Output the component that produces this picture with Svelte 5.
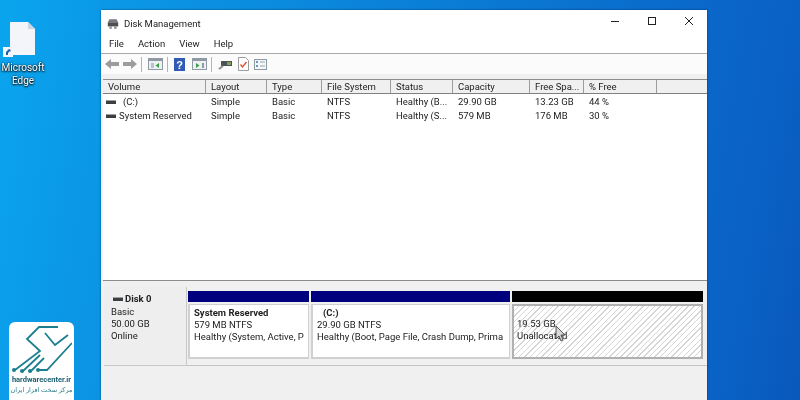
<script>
  const menus = ['File', 'Action', 'View', 'Help'];

  const columns = [
    { name: 'Volume', width: 103 },
    { name: 'Layout', width: 61 },
    { name: 'Type', width: 55 },
    { name: 'File System', width: 69 },
    { name: 'Status', width: 62 },
    { name: 'Capacity', width: 77 },
    { name: 'Free Spa...', width: 54 },
    { name: '% Free', width: 73 }
  ];

  const volumes = [
    { name: '(C:)', indent: true, cells: ['Simple', 'Basic', 'NTFS', 'Healthy (B...', '29.90 GB', '13.23 GB', '44 %'] },
    { name: 'System Reserved', indent: false, cells: ['Simple', 'Basic', 'NTFS', 'Healthy (S...', '579 MB', '176 MB', '30 %'] }
  ];
</script>

<div class="desktop">
  <div class="shortcut">
    <svg class="file-icon" width="36" height="38" viewBox="0 0 36 38">
      <path d="M7 2h18l7 7v26H7z" fill="#f3f5fb" />
      <path d="M25 2l7 7h-7z" fill="#cfd6e2" />
      <rect x="0" y="27" width="10" height="10" fill="#f4f6fa" />
      <path d="M3 35v-3l2-2H4l3-1 1 3-1-1-2 2v2z" fill="#1f5fb0" />
    </svg>
    <span>Microsoft</span>
    <span>Edge</span>
  </div>

  <div class="window">
    <header class="titlebar">
      <svg width="12" height="12" viewBox="0 0 15 14">
        <path d="M3 1h9l2 4H1z" fill="#77797c" />
        <rect x="1" y="5" width="13" height="5" fill="#4c4e52" />
        <rect x="3" y="10" width="3" height="3" fill="#8a8c90" />
        <rect x="9" y="10" width="3" height="3" fill="#8a8c90" />
      </svg>
      <span class="title">Disk Management</span>
      <div class="controls">
        <svg width="10" height="10" viewBox="0 0 10 10"><path d="M1 5.500h8" stroke="#222" /></svg>
        <svg width="10" height="10" viewBox="0 0 10 10"><rect x="1.500" y="1.500" width="7" height="7" fill="none" stroke="#222" /></svg>
        <svg width="10" height="10" viewBox="0 0 10 10"><path d="M1 1l8 8M9 1l-8 8" stroke="#222" /></svg>
      </div>
    </header>

    <nav class="menubar">
      {#each menus as item}
        <span>{item}</span>
      {/each}
    </nav>

    <div class="toolbar">
      <svg width="14" height="12" viewBox="0 0 14 12"><path d="M0 6l6-5v3h8v4H6v3z" fill="#9a9c9e" /></svg>
      <svg width="14" height="12" viewBox="0 0 14 12"><path d="M14 6L8 1v3H0v4h8v3z" fill="#9a9c9e" /></svg>
      <i class="sep"></i>
      <svg width="15" height="12" viewBox="0 0 15 12">
        <rect x="0.500" y="0.500" width="14" height="11" fill="#eef1f4" stroke="#8f9aa3" />
        <rect x="1" y="1" width="13" height="2" fill="#8f9aa3" />
        <rect x="3" y="5" width="3" height="5" fill="#b9c3cb" />
        <path d="M11 5v5L7.500 7.500z" fill="#3aa04a" />
      </svg>
      <i class="sep"></i>
      <svg class="help-icon" width="11" height="13" viewBox="0 0 11 13">
        <rect width="11" height="13" fill="#2f5bb5" />
        <text x="5.500" y="10.500" text-anchor="middle" class="help">?</text>
      </svg>
      <svg width="15" height="12" viewBox="0 0 15 12">
        <rect x="0.500" y="0.500" width="14" height="11" fill="#eef1f4" stroke="#8f9aa3" />
        <rect x="1" y="1" width="13" height="2" fill="#8f9aa3" />
        <path d="M4 5v5l3.500-2.500z" fill="#3aa04a" />
        <rect x="10" y="5" width="2" height="5" fill="#8f9aa3" />
      </svg>
      <i class="sep"></i>
      <svg width="14" height="12" viewBox="0 0 14 12">
        <rect x="3" y="3" width="11" height="5" fill="#4c5257" />
        <rect x="9" y="4" width="4" height="3" fill="#7ea05c" />
        <path d="M5 8L1 11" stroke="#8a8f94" stroke-width="2" />
      </svg>
      <svg class="check-doc" width="11" height="14" viewBox="0 0 11 14">
        <path d="M0.500 0.500h7l3 3v10h-10z" fill="#fff" stroke="#9a9c9e" />
        <path d="M2.500 7.500l2 2.500 4-5" fill="none" stroke="#d9542b" stroke-width="1.400" />
      </svg>
      <svg class="check-list" width="13" height="11" viewBox="0 0 13 11">
        <rect x="0.500" y="0.500" width="12" height="10" fill="#f4f7fa" stroke="#8f9aa3" />
        <path d="M2 3h2M2 7h2" stroke="#3f76b5" stroke-width="1.500" />
        <path d="M6 3h5M6 7h5" stroke="#9aa3ab" />
      </svg>
    </div>

    <section class="list">
      <div class="list-head">
        {#each columns as col}
          <div class="col" style="width: {col.width}px">{col.name}</div>
        {/each}
      </div>
      {#each volumes as vol}
        <div class="row">
          <div class="cell vol" style="width: {columns[0].width}px">
            <span class="drive"></span>
            <span class:indent={vol.indent}>{vol.name}</span>
          </div>
          {#each vol.cells as cell, i}
            <div class="cell" style="width: {columns[i + 1].width}px">{cell}</div>
          {/each}
        </div>
      {/each}
    </section>

    <section class="graphical">
      <div class="disk-row">
        <div class="disk-label">
          <div class="disk-name"><span class="drive"></span>Disk 0</div>
          <div>Basic</div>
          <div>50.00 GB</div>
          <div>Online</div>
        </div>
        <div class="partition system">
          <div class="bar"></div>
          <div class="box">
            <strong>System Reserved</strong>
            <div>579 MB NTFS</div>
            <div>Healthy (System, Active, P</div>
          </div>
        </div>
        <div class="partition primary">
          <div class="bar"></div>
          <div class="box">
            <strong class="drive-letter">(C:)</strong>
            <div>29.90 GB NTFS</div>
            <div>Healthy (Boot, Page File, Crash Dump, Prima</div>
          </div>
        </div>
        <div class="partition free">
          <div class="bar"></div>
          <div class="box">
            <div>19.53 GB</div>
            <div>Unallocated</div>
            <svg class="cursor" width="12" height="18" viewBox="0 0 12 18">
              <path d="M1 1v13l3-3 2 5 2-1-2-5h4z" fill="#d8d8d8" stroke="#333" stroke-width="0.800" />
            </svg>
          </div>
        </div>
      </div>
    </section>
  </div>

  <div class="badge">
    <svg width="60" height="48" viewBox="0 0 60 48">
      <g fill="none" stroke="#1b7f8f" stroke-width="1.800">
        <path d="M46 2H27L15 14l13 12L3 45" />
        <path d="M33 8l10 12 13-10" />
        <path d="M60 18L35 45h-9" />
        <path d="M10 47l18-17" />
        <path d="M18 47l14-14" />
      </g>
      <g fill="#1b7f8f">
        <circle cx="2" cy="45" r="2" />
        <circle cx="10" cy="46" r="2" />
        <circle cx="18" cy="46" r="2" />
        <circle cx="26" cy="45" r="2" />
      </g>
    </svg>
    <span class="brand">hardwarecenter.ir</span>
    <span class="brand-fa">مرکز سخت افزار ایران</span>
  </div>
</div>

<style>
  :global(body) {
    margin: 0;
  }

  .desktop {
    position: relative;
    width: 800px;
    height: 400px;
    overflow: hidden;
    background: linear-gradient(100deg, #0aa5ee 0%, #0b98e6 13%, #0a62c6 90%, #0a58bc 100%);
    font-family: Roboto, "Liberation Sans", sans-serif;
    font-size: 9.500px;
    color: #222;
    filter: blur(0.300px);
  }

  .shortcut {
    position: absolute;
    left: 0;
    top: 20px;
    width: 46px;
    display: flex;
    flex-direction: column;
    align-items: center;
    color: #fff;
    font-size: 10px;
    line-height: 13px;
    text-shadow: 0 0 2px #000, 0 1px 2px #000;
  }

  .file-icon {
    align-self: flex-start;
    margin: 0 0 3px 3px;
  }

  .window {
    position: absolute;
    left: 101px;
    top: 10px;
    width: 606px;
    height: 390px;
    display: flex;
    flex-direction: column;
    background: #f0f0f0;
    box-shadow: 0 0 2px rgba(0, 0, 0, 0.5);
  }

  .titlebar {
    height: 27px;
    flex: none;
    display: flex;
    align-items: center;
    gap: 5px;
    padding-left: 6px;
    background: #fff;
  }

  .controls {
    margin: 0 0 5px auto;
    display: flex;
    gap: 27px;
    padding-right: 13px;
  }

  .menubar {
    height: 16px;
    flex: none;
    display: flex;
    gap: 14px;
    padding-left: 8px;
    background: #fff;
    border-bottom: 1px solid #a9a9a9;
    line-height: 14px;
  }

  .toolbar {
    height: 20px;
    flex: none;
    display: flex;
    align-items: center;
    gap: 4px;
    padding-left: 4px;
    background: #fbfbfb;
  }

  .sep {
    width: 1px;
    height: 15px;
    margin-right: 2px;
    background: #b5b5b5;
  }

  .help-icon {
    margin-right: 3px;
  }

  .check-doc {
    margin-left: 2px;
  }

  .check-list {
    margin-left: 1px;
  }

  .help {
    font: bold 11px "Liberation Sans", sans-serif;
    fill: #fff;
  }

  .list {
    flex: none;
    margin: 5px 0 0 2px;
    height: 201px;
    background: #fff;
    border-bottom: 1px solid #8c8c8c;
  }

  .list-head {
    height: 15px;
    display: flex;
    background: #f0f0f0;
    border-top: 1px solid #8f8f8f;
    border-bottom: 1px solid #808080;
    box-sizing: border-box;
  }

  .col {
    flex: none;
    box-sizing: border-box;
    padding-left: 5px;
    line-height: 14px;
    white-space: nowrap;
    overflow: hidden;
    border-right: 1px solid #9c9c9c;
  }

  .row {
    height: 14px;
    display: flex;
    line-height: 14px;
  }

  .list-head + .row {
    margin-top: 1px;
  }

  .cell {
    flex: none;
    box-sizing: border-box;
    padding-left: 5px;
    white-space: nowrap;
  }

  .vol {
    display: flex;
    align-items: center;
    gap: 3px;
    padding-left: 3px;
  }

  .indent {
    margin-left: 4px;
  }

  .drive {
    display: inline-block;
    flex: none;
    width: 10px;
    height: 3px;
    background: #3c3f42;
    border-top: 1px solid #9da0a3;
  }

  .graphical {
    flex: 1;
    padding: 5px 0 0 3px;
  }

  .disk-row {
    height: 79px;
    display: flex;
    border-bottom: 1px solid #c4c4c4;
  }

  .disk-label {
    width: 82px;
    flex: none;
    box-sizing: border-box;
    margin-right: 2px;
    padding: 7px 0 0 7px;
    line-height: 12px;
    background: #eeeeee;
    box-shadow: 1px 1px 0 #c8c8c8;
  }

  .disk-name {
    display: flex;
    align-items: center;
    gap: 2px;
    padding-left: 2px;
    font-weight: 700;
    margin-bottom: 1px;
  }

  .partition {
    flex: none;
    display: flex;
    flex-direction: column;
    padding-top: 5px;
    margin-right: 2px;
  }

  .system {
    width: 121px;
  }

  .primary {
    width: 199px;
  }

  .free {
    width: 191px;
    margin-right: 0;
  }

  .bar {
    height: 11px;
    flex: none;
    background: #00007e;
  }

  .free .bar {
    background: #000;
  }

  .box {
    position: relative;
    height: 55px;
    margin-top: 2px;
    box-sizing: border-box;
    padding: 2px 0 0 4px;
    line-height: 12px;
    white-space: nowrap;
    overflow: hidden;
    background: #fff;
    border: 2px solid #d0d0d0;
    border-width: 1px 1px 2px 2px;
  }

  .box strong {
    display: block;
    font-weight: 700;
  }

  .drive-letter {
    padding-left: 6px;
  }

  .free .box {
    padding: 12px 0 0 3px;
    border: 2px solid #b0b0b0;
    background: repeating-linear-gradient(135deg, #fff 0, #fff 3px, #d6d6d6 3px, #d6d6d6 4px);
  }

  .cursor {
    position: absolute;
    left: 41px;
    top: 19px;
  }

  .badge {
    position: absolute;
    left: 9px;
    top: 322px;
    width: 65px;
    height: 78px;
    box-sizing: border-box;
    padding-top: 3px;
    display: flex;
    flex-direction: column;
    align-items: center;
    background: #fff;
    border-radius: 6px 6px 0 0;
  }

  .brand {
    margin-top: 2px;
    font: 700 7.500px Roboto, sans-serif;
    color: #1c5f6e;
    white-space: nowrap;
  }

  .brand-fa {
    margin-top: 1px;
    font: 6.500px "Noto Sans", "DejaVu Sans", sans-serif;
    color: #2b7f8c;
    white-space: nowrap;
  }
</style>
